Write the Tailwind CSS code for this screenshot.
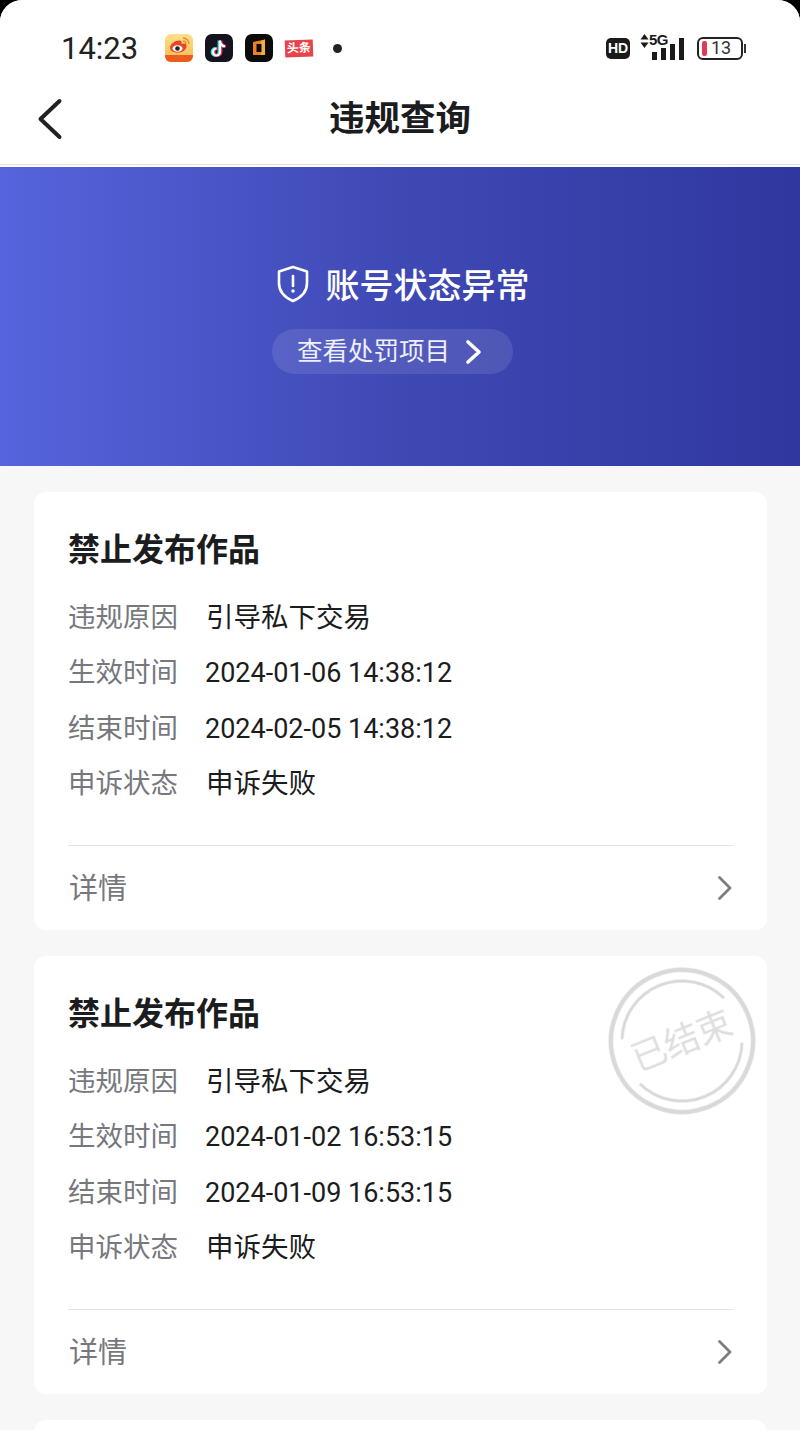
<!DOCTYPE html>
<html lang="zh-CN">
<head>
<meta charset="UTF-8">
<meta name="viewport" content="width=device-width, initial-scale=1.0">
<title>违规查询</title>
<script src="https://cdn.jsdelivr.net/npm/@tailwindcss/browser@4"></script>
</head>
<body class="bg-black">
<div class="relative w-[800px] h-[1430px] overflow-hidden bg-[#f7f7f7] rounded-t-[22px] font-['Roboto','Noto_Sans_CJK_SC',sans-serif] text-[#1b1c20]">

  <!-- Status bar -->
  <div class="h-[85px] bg-white flex items-center pl-[61px] pr-[54px] pt-[11px]">
    <span class="text-[31px] leading-none text-[#222] w-[104px]">14:23</span>
    <div class="flex items-center gap-[12px]">
      <!-- weibo -->
      <svg width="28" height="28" viewBox="0 0 28 28">
        <defs><linearGradient id="wb" x1="0" y1="0" x2="0" y2="1"><stop offset="0" stop-color="#fde08a"/><stop offset="1" stop-color="#f7b84e"/></linearGradient></defs>
        <rect width="28" height="28" rx="6" fill="url(#wb)"/>
        <path d="M0 21h28v1a6 6 0 0 1-6 6H6a6 6 0 0 1-6-6z" fill="#ee5b1f"/>
        <path d="M5 14c0-4 5-7.500 9-7.500 3 0 3 2 2.500 3.500 3-1 5-.5 5 2 0 4-4 6.500-8.500 6.500S5 17 5 14z" fill="#e8452c"/>
        <ellipse cx="12.500" cy="14.500" rx="5" ry="3.300" fill="#fff"/>
        <circle cx="12.500" cy="14.500" r="2.300" fill="#222"/>
        <path d="M18 4a6 6 0 0 1 6 6M18 7a3 3 0 0 1 3 3" stroke="#f08a24" stroke-width="1.300" fill="none"/>
      </svg>
      <!-- douyin -->
      <svg width="28" height="28" viewBox="0 0 28 28">
        <rect width="28" height="28" rx="7" fill="#15131f"/>
        <path d="M15 6v11.500a3.500 3.500 0 1 1-3.500-3.500M15 7c.5 3 2.500 4.500 5 5" stroke="#25e6e6" stroke-width="2.800" fill="none" transform="translate(-1 .5)"/>
        <path d="M15 6v11.500a3.500 3.500 0 1 1-3.500-3.500M15 7c.5 3 2.500 4.500 5 5" stroke="#f0305a" stroke-width="2.800" fill="none" transform="translate(1 .5)"/>
        <path d="M15 6v11.500a3.500 3.500 0 1 1-3.500-3.500M15 7c.5 3 2.500 4.500 5 5" stroke="#fff" stroke-width="2.200" fill="none" transform="translate(0 .5)"/>
      </svg>
      <!-- orange book app -->
      <svg width="28" height="28" viewBox="0 0 28 28">
        <rect width="28" height="28" rx="7" fill="#0b0b0b"/>
        <path d="M8 8l12-2.500V21H8z" fill="#ee7f1e"/>
        <path d="M16 7l4-1.500V21h-4z" fill="#f6b13c"/>
        <rect x="11.500" y="10" width="5" height="8" fill="#0b0b0b"/>
      </svg>
      <!-- toutiao -->
      <div class="w-[28px] h-[17px] bg-[#e8434a] text-white text-[12px] leading-[17px] text-center font-bold -rotate-2">头条</div>
      <div class="ml-[8px] w-[9px] h-[9px] rounded-full bg-[#222]"></div>
    </div>
    <div class="ml-auto flex items-center">
      <div class="w-[24px] h-[21px] rounded-[5px] bg-[#1a1a1a] text-white text-[14px] leading-[21px] text-center font-bold font-['Liberation_Sans',sans-serif]">HD</div>
      <div class="relative ml-[10px] w-[45px] h-[24px]">
        <svg class="absolute left-0 -top-[2px]" width="9" height="14" viewBox="0 0 9 14"><path d="M4.500 0l4 5.500H.5zM4.500 14l-4-5.500h8z" fill="#1a1a1a"/></svg>
        <span class="absolute left-[9px] -top-[5px] text-[15px] font-bold leading-[18px] tracking-[-0.5px] text-[#1a1a1a] font-['Liberation_Sans',sans-serif]">5G</span>
        <div class="absolute left-[12px] bottom-0 flex items-end gap-[4px]">
          <div class="w-[5px] h-[8px] bg-[#1a1a1a]"></div>
          <div class="w-[5px] h-[12px] bg-[#1a1a1a]"></div>
          <div class="w-[5px] h-[16px] bg-[#1a1a1a]"></div>
          <div class="w-[5px] h-[22px] bg-[#1a1a1a]"></div>
        </div>
      </div>
      <div class="ml-[12px] flex items-center">
        <div class="w-[46px] h-[23px] rounded-[6px] border-2 border-[#222] flex items-center pl-[3px] pr-[2px]">
          <div class="w-[5px] h-[15px] rounded-[2px] bg-[#dd3b57]"></div>
          <span class="ml-[4px] text-[18px] leading-none text-[#333]">13</span>
        </div>
        <div class="ml-[1px] w-[2px] h-[9px] bg-[#333]"></div>
      </div>
    </div>
  </div>

  <!-- Nav -->
  <div class="relative h-[80px] bg-white flex items-center justify-center border-b-[1px] border-[#dcdde6]">
    <svg class="absolute left-[37px] top-[13px]" width="26" height="42" viewBox="0 0 26 42"><path d="M22.500 3L3.500 21l19 18" stroke="#222" stroke-width="4" stroke-linecap="round" stroke-linejoin="round" fill="none"/></svg>
    <h1 class="text-[35.500px] leading-none font-bold -mt-[10px]">违规查询</h1>
  </div>
  <div class="h-[2px] bg-white"></div>

  <!-- Banner -->
  <div class="h-[299px] bg-gradient-to-r from-[#5664dd] via-[#3f49b4] to-[#30379f] flex flex-col items-center">
    <div class="mt-[100px] ml-[6px] flex items-center text-white">
      <svg class="-mt-[2px]" width="32" height="38" viewBox="0 0 32 38"><path d="M16 2l14 4.500v12c0 8.500-6 14-14 17.500C8 32.500 2 27 2 18.500v-12z" stroke="#fff" stroke-width="2.600" stroke-linejoin="round" fill="none"/><path d="M16 11v10" stroke="#fff" stroke-width="2.600" stroke-linecap="round"/><circle cx="16" cy="26" r="1.700" fill="#fff"/></svg>
      <span class="ml-[17px] mt-[1px] text-[34px] leading-none font-medium">账号状态异常</span>
    </div>
    <div class="mt-[26px] -ml-[15px] w-[241px] h-[45px] rounded-full bg-white/10 flex items-center pl-[25px] text-white/90">
      <span class="text-[25.500px] leading-none">查看处罚项目</span>
      <svg class="ml-[15px]" width="18" height="26" viewBox="0 0 18 26"><path d="M3 3l11 10L3 23" stroke="#fff" stroke-width="3.600" stroke-linecap="round" stroke-linejoin="round" fill="none"/></svg>
    </div>
  </div>

  <!-- Cards -->
  <div class="pl-[34px] pr-[33px] pt-[26px] flex flex-col gap-[26px]">

    <div class="relative h-[438px] bg-white rounded-[12px] px-[34px] flex flex-col">
      <h2 class="mt-[42px] text-[32px] leading-none font-bold">禁止发布作品</h2>
      <dl class="mt-[37.500px] flex flex-col gap-[27.500px] text-[27.500px] leading-[28px]">
        <div class="flex"><dt class="w-[138px] text-[#77787d]">违规原因</dt><dd>引导私下交易</dd></div>
        <div class="flex"><dt class="w-[137px] text-[#77787d]">生效时间</dt><dd class="text-[27px]">2024-01-06 14:38:12</dd></div>
        <div class="flex"><dt class="w-[137px] text-[#77787d]">结束时间</dt><dd class="text-[27px]">2024-02-05 14:38:12</dd></div>
        <div class="flex"><dt class="w-[138px] text-[#77787d]">申诉状态</dt><dd>申诉失败</dd></div>
      </dl>
      <div class="mt-auto h-[85px] border-t border-[#e3e3e3] flex items-center justify-between">
        <span class="ml-[1px] mt-[2px] text-[29px] leading-none text-[#77787d]">详情</span>
        <svg class="mr-[1px]" width="15" height="26" viewBox="0 0 15 26"><path d="M2.500 2.500L13 13 2.500 23.500" stroke="#7d7d7f" stroke-width="2.800" stroke-linecap="round" stroke-linejoin="round" fill="none"/></svg>
      </div>
    </div>

    <div class="relative h-[438px] bg-white rounded-[12px] px-[34px] flex flex-col">
      <h2 class="mt-[42px] text-[32px] leading-none font-bold">禁止发布作品</h2>
      <dl class="mt-[37.500px] flex flex-col gap-[27.500px] text-[27.500px] leading-[28px]">
        <div class="flex"><dt class="w-[138px] text-[#77787d]">违规原因</dt><dd>引导私下交易</dd></div>
        <div class="flex"><dt class="w-[137px] text-[#77787d]">生效时间</dt><dd class="text-[27px]">2024-01-02 16:53:15</dd></div>
        <div class="flex"><dt class="w-[137px] text-[#77787d]">结束时间</dt><dd class="text-[27px]">2024-01-09 16:53:15</dd></div>
        <div class="flex"><dt class="w-[138px] text-[#77787d]">申诉状态</dt><dd>申诉失败</dd></div>
      </dl>
      <div class="mt-auto h-[85px] border-t border-[#e3e3e3] flex items-center justify-between">
        <span class="ml-[1px] mt-[2px] text-[29px] leading-none text-[#77787d]">详情</span>
        <svg class="mr-[1px]" width="15" height="26" viewBox="0 0 15 26"><path d="M2.500 2.500L13 13 2.500 23.500" stroke="#7d7d7f" stroke-width="2.800" stroke-linecap="round" stroke-linejoin="round" fill="none"/></svg>
      </div>
      <!-- stamp -->
      <div class="absolute left-[574px] top-[11px] w-[148px] h-[148px] -rotate-[22deg] flex items-center justify-center blur-[0.6px]">
        <svg class="absolute inset-0" width="148" height="148" viewBox="0 0 148 148">
          <circle cx="74" cy="74" r="71" stroke="#d9d9d9" stroke-width="4.500" fill="none"/>
          <path d="M19 50A60 60 0 0 1 129 50" stroke="#d8d8d8" stroke-width="3" fill="none"/>
          <path d="M19 98A60 60 0 0 0 129 98" stroke="#d8d8d8" stroke-width="3" fill="none"/>
        </svg>
        <span class="relative text-[35px] leading-none text-[#dedede]">已结束</span>
      </div>
    </div>

    <div class="h-[60px] bg-white rounded-t-[12px]"></div>
  </div>
</div>
</body>
</html>
